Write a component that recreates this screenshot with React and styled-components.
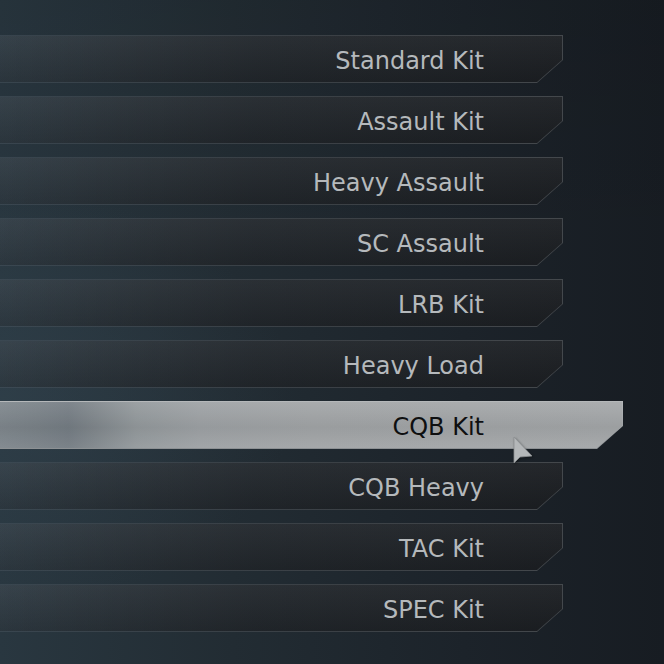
import React from "react";
import styled, { createGlobalStyle, css } from "styled-components";

const GlobalStyle = createGlobalStyle`
  html, body {
    margin: 0;
    padding: 0;
  }
  body {
    width: 664px;
    height: 664px;
    overflow: hidden;
    font-family: "DejaVu Sans", "Liberation Sans", sans-serif;
  }
`;

const Screen = styled.div`
  position: relative;
  width: 664px;
  height: 664px;
  box-sizing: border-box;
  padding-top: 35px;
  background:
    radial-gradient(ellipse 420px 300px at 0% 60%, rgba(52, 70, 82, 0.45), transparent 70%),
    linear-gradient(180deg, rgba(0, 0, 0, 0.08) 0%, rgba(0, 0, 0, 0) 40%, rgba(0, 0, 0, 0) 100%),
    linear-gradient(90deg, #293740 0%, #222c33 35%, #1c232a 70%, #171c22 100%);
`;

const Menu = styled.div`
  display: flex;
  flex-direction: column;
  gap: 13px;
`;

const chamfer = (h) => css`
  clip-path: polygon(0 0, 100% 0, 100% ${h}px, calc(100% - 26px) 100%, 0 100%);
`;

const Row = styled.div`
  width: ${(p) => (p.$active ? 623 : 563)}px;
  height: 48px;
  box-sizing: border-box;
  padding: 1px 1px 1px 0;
  ${chamfer(25)}
  background: ${(p) =>
    p.$active
      ? "linear-gradient(180deg, #b5b8ba 0%, #8c9093 100%)"
      : "linear-gradient(90deg, rgba(70, 82, 92, 0.55) 0%, rgba(62, 67, 72, 0.9) 60%, rgba(70, 74, 78, 0.95) 100%)"};
`;

const Face = styled.div`
  height: 100%;
  display: flex;
  align-items: center;
  justify-content: flex-end;
  box-sizing: border-box;
  padding-right: ${(p) => (p.$active ? 138 : 78)}px;
  clip-path: polygon(0 0, 100% 0, 100% 24px, calc(100% - 25px) 100%, 0 100%);
  background: ${(p) =>
    p.$active
      ? `linear-gradient(180deg, rgba(255,255,255,0.07) 0%, rgba(0,0,0,0.05) 55%, rgba(255,255,255,0.04) 100%),
         linear-gradient(90deg, #7f878d 0%, #7a8288 6%, #757d84 11%, #80878c 15%, #949a9d 22%, #9ea2a5 32%, #a2a5a7 50%, #a4a7a9 100%)`
      : `linear-gradient(180deg, rgba(255,255,255,0.03) 0%, rgba(0,0,0,0.12) 100%),
         linear-gradient(90deg, rgba(34, 44, 51, 0.35) 0%, rgba(30, 35, 40, 0.8) 45%, rgba(27, 30, 34, 0.95) 100%)`};
`;

const Label = styled.span`
  font-family: "DejaVu Sans", "Liberation Sans", sans-serif;
  font-size: 24px;
  line-height: 1;
  padding-top: 3px;
  color: ${(p) => (p.$active ? "#0e0f10" : "#b5b9bc")};
  white-space: nowrap;
`;

const Pointer = styled.svg`
  position: absolute;
  left: 512px;
  top: 436px;
  width: 22px;
  height: 30px;
  filter: drop-shadow(1px 1px 1px rgba(0, 0, 0, 0.35));
`;

const kits = [
  "Standard Kit",
  "Assault Kit",
  "Heavy Assault",
  "SC Assault",
  "LRB Kit",
  "Heavy Load",
  "CQB Kit",
  "CQB Heavy",
  "TAC Kit",
  "SPEC Kit",
];

const selected = "CQB Kit";

const App = () => {
  return (
    <>
      <GlobalStyle />
      <Screen>
        <Menu>
          {kits.map((kit) => {
            const active = kit === selected;
            return (
              <Row key={kit} $active={active}>
                <Face $active={active}>
                  <Label $active={active}>{kit}</Label>
                </Face>
              </Row>
            );
          })}
        </Menu>
        <Pointer viewBox="0 0 22 30">
          <path
            d="M2 1 L2 27 L8 21 L20 20 Z"
            fill="#b4b7b9"
            stroke="#8a8e91"
            strokeWidth="0.8"
            strokeLinejoin="round"
          />
        </Pointer>
      </Screen>
    </>
  );
};

export default App;
